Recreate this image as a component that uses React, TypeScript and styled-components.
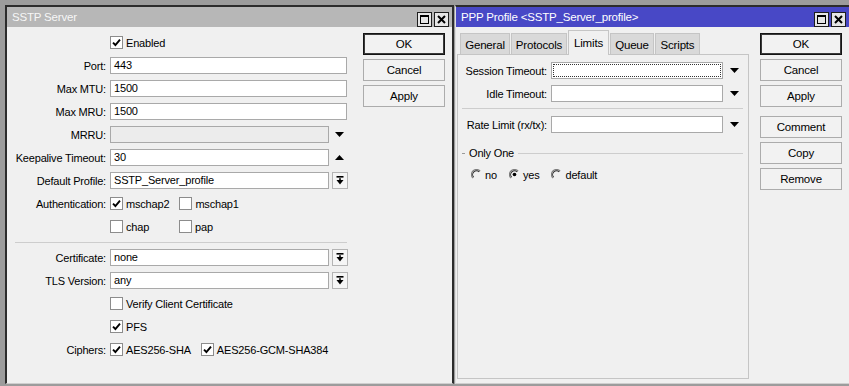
import React from 'react';
import styled, { createGlobalStyle } from 'styled-components';

const GlobalStyle = createGlobalStyle`
  html, body {
    margin: 0;
    padding: 0;
  }
  body {
    background: #9c9c9c;
    font-family: "Liberation Sans", Arial, sans-serif;
    font-size: 11px;
    letter-spacing: -0.18px;
    color: #000;
    overflow: hidden;
  }
`;

const Desktop = styled.div`
  display: flex;
  align-items: flex-start;
  gap: 1px;
  height: 386px;
  padding: 5px 0 0 5px;
  box-sizing: border-box;
`;

const Window = styled.div<{ $w: number; $active?: boolean }>`
  flex: none;
  width: ${({ $w }) => $w}px;
  height: 379px;
  box-sizing: border-box;
  display: flex;
  flex-direction: column;
  background: #f0f0f0;
  border-top: 2px solid #2c2c2c;
  border-left: ${({ $active }) => ($active ? '1px solid #dedede' : '2px solid #2c2c2c')};
  border-right: ${({ $active }) => ($active ? 'none' : '2px solid #2c2c2c')};
  border-bottom: 1px solid #cfcfcf;
`;

const TitleBar = styled.div<{ $active?: boolean }>`
  flex: none;
  height: 20px;
  display: flex;
  align-items: center;
  justify-content: space-between;
  padding: 0 3px 0 5px;
  background: ${({ $active }) => ($active ? '#4848c6' : '#b7b7b7')};
  color: ${({ $active }) => ($active ? '#ffffff' : '#f6f6f6')};
  font-size: 11.5px;
`;

const TitleButtons = styled.div`
  display: flex;
  gap: 2px;
  margin-top: 4px;
`;

const TitleButton = styled.div`
  width: 15px;
  height: 15px;
  box-sizing: border-box;
  border: 1px solid #1e1e1e;
  background: #e6e6e6;
  display: flex;
  align-items: center;
  justify-content: center;
`;

const Body = styled.div`
  flex: 1;
  display: flex;
  min-height: 0;
`;

const Form = styled.div`
  flex: none;
  width: 340px;
  padding-top: 4px;
  display: flex;
  flex-direction: column;
`;

const Row = styled.div`
  display: flex;
  align-items: center;
  height: 23px;
`;

const Label = styled.div<{ $w: number }>`
  flex: none;
  width: ${({ $w }) => $w}px;
  margin-right: 4px;
  text-align: right;
  white-space: nowrap;
`;

const Field = styled.div<{ $w: number; $disabled?: boolean; $focused?: boolean }>`
  position: relative;
  flex: none;
  width: ${({ $w }) => $w}px;
  height: 17px;
  box-sizing: border-box;
  border: 1px solid #a9a9a9;
  background: ${({ $disabled }) => ($disabled ? '#ececec' : '#ffffff')};
  padding: 0 3px;
  line-height: 15px;
  white-space: nowrap;
  overflow: hidden;

  &::after {
    content: '';
    display: ${({ $focused }) => ($focused ? 'block' : 'none')};
    position: absolute;
    inset: 1px;
    border: 1px dotted #333;
  }
`;

const Slot = styled.div<{ $w: number }>`
  flex: none;
  width: ${({ $w }) => $w}px;
  height: 17px;
  margin-left: 3px;
  display: flex;
  align-items: center;
  justify-content: center;
`;

const ComboButton = styled(Slot)`
  box-sizing: border-box;
  border: 1px solid #b4b4b4;
  background: #f5f5f5;
`;

const ChecksRow = styled.div<{ $gap?: number }>`
  display: flex;
  align-items: center;
  gap: ${({ $gap }) => $gap ?? 10}px;
`;

const CheckItem = styled.div<{ $minW?: number }>`
  display: flex;
  align-items: center;
  gap: 3px;
  min-width: ${({ $minW }) => ($minW ? `${$minW}px` : 'auto')};
  white-space: nowrap;
`;

const Box = styled.div`
  flex: none;
  width: 13px;
  height: 13px;
  box-sizing: border-box;
  border: 1px solid #8c8c8c;
  background: #fff;
  display: flex;
  align-items: center;
  justify-content: center;
`;

const Separator = styled.div<{ $m: string }>`
  height: 1px;
  background: #cdcdcd;
  margin: ${({ $m }) => $m};
`;

const Spacer = styled.div<{ $w: number }>`
  flex: none;
  width: ${({ $w }) => $w}px;
`;

const Buttons = styled.div<{ $ml: number }>`
  flex: none;
  display: flex;
  flex-direction: column;
  gap: 4px;
  margin: 6px 0 0 ${({ $ml }) => $ml}px;
`;

const Button = styled.div<{ $default?: boolean; $gapTop?: number }>`
  width: 82px;
  height: 22px;
  box-sizing: border-box;
  display: flex;
  align-items: center;
  justify-content: center;
  background: #f2f2f2;
  border: 1px solid ${({ $default }) => ($default ? '#151515' : '#acacac')};
  box-shadow: ${({ $default }) => ($default ? 'inset 0 0 0 1px #3a3a3a' : 'none')};
  margin-top: ${({ $gapTop }) => $gapTop ?? 0}px;
  font-size: 11.5px;
`;

const TabsArea = styled.div`
  flex: none;
  width: 292px;
  margin-left: 1px;
  display: flex;
  flex-direction: column;
`;

const TabStrip = styled.div`
  flex: none;
  height: 24px;
  margin: 3px 0 0 3px;
  display: flex;
  align-items: flex-end;
  gap: 1px;
`;

const Tab = styled.div<{ $w: number; $active?: boolean }>`
  width: ${({ $w }) => $w}px;
  height: ${({ $active }) => ($active ? 25 : 21)}px;
  box-sizing: border-box;
  display: flex;
  align-items: center;
  justify-content: center;
  padding-top: ${({ $active }) => ($active ? 0 : 1)}px;
  border: 1px solid #c5c5c5;
  border-bottom: none;
  background: ${({ $active }) => ($active ? '#f0f0f0' : '#d9d9d9')};
  margin-bottom: ${({ $active }) => ($active ? -1 : 0)}px;
  position: relative;
  z-index: ${({ $active }) => ($active ? 1 : 0)};
  font-size: 11.5px;
`;

const Panel = styled.div`
  flex: 1;
  margin-bottom: 4px;
  border: 1px solid #c5c5c5;
  background: #f0f0f0;
  padding-top: 4px;
  display: flex;
  flex-direction: column;
`;

const GroupHeader = styled.div`
  display: flex;
  align-items: center;
  gap: 4px;
  height: 14px;
  margin: 10px 5px 0 4px;

  &::before {
    content: '';
    width: 3px;
    height: 1px;
    background: #9a9a9a;
  }
  &::after {
    content: '';
    flex: 1;
    height: 1px;
    background: #cdcdcd;
  }
`;

const RadioRow = styled.div`
  display: flex;
  align-items: center;
  gap: 12px;
  height: 23px;
  margin-top: 3px;
  padding-left: 13px;
`;

const RadioItem = styled.div`
  display: flex;
  align-items: center;
  gap: 3px;
`;

const Check = () => (
  <svg width="11" height="11" viewBox="0 0 11 11">
    <path d="M2 5.6 L4.4 8 L9 2.6" fill="none" stroke="#000" strokeWidth="1.9" />
  </svg>
);

const Checkbox = ({ checked, label, minW }: { checked?: boolean; label: string; minW?: number }) => (
  <CheckItem $minW={minW}>
    <Box>{checked && <Check />}</Box>
    <span>{label}</span>
  </CheckItem>
);

const Radio = ({ checked, label }: { checked?: boolean; label: string }) => (
  <RadioItem>
    <svg width="11" height="11" viewBox="0 0 12 12">
      <path d="M10 2.2 A5.3 5.3 0 0 0 2 10" fill="none" stroke="#7d7d7d" strokeWidth="1.2" />
      <path d="M9 3.2 A4 4 0 0 0 3 9" fill="none" stroke="#2a2a2a" strokeWidth="1.1" />
      {checked && <circle cx="6" cy="6" r="2" fill="#000" />}
    </svg>
    <span>{label}</span>
  </RadioItem>
);

const TriangleDown = () => (
  <svg width="9" height="5" viewBox="0 0 9 5">
    <path d="M0 0 H9 L4.5 5 Z" fill="#000" />
  </svg>
);

const TriangleUp = () => (
  <svg width="9" height="5" viewBox="0 0 9 5">
    <path d="M0 5 H9 L4.5 0 Z" fill="#000" />
  </svg>
);

const ComboIcon = () => (
  <svg width="8" height="9" viewBox="0 0 8 9">
    <rect x="0.5" y="0" width="7" height="1.6" fill="#000" />
    <rect x="3.2" y="2.2" width="1.6" height="2" fill="#000" />
    <path d="M0.5 4 H7.5 L4 8.5 Z" fill="#000" />
  </svg>
);

const MaxIcon = () => (
  <svg width="9" height="9" viewBox="0 0 9 9">
    <rect x="0.5" y="0.5" width="8" height="8" fill="none" stroke="#000" strokeWidth="1" />
    <rect x="0" y="0" width="9" height="2" fill="#000" />
  </svg>
);

const CloseIcon = () => (
  <svg width="9" height="9" viewBox="0 0 9 9">
    <path d="M1 1 L8 8 M8 1 L1 8" stroke="#000" strokeWidth="2" />
  </svg>
);

const WindowControls = () => (
  <TitleButtons>
    <TitleButton><MaxIcon /></TitleButton>
    <TitleButton><CloseIcon /></TitleButton>
  </TitleButtons>
);

const L = 99;

const SstpServer = () => (
  <Window $w={449}>
    <TitleBar>
      <span>SSTP Server</span>
      <WindowControls />
    </TitleBar>
    <Body>
      <Form>
        <Row>
          <Spacer $w={L + 4} />
          <Checkbox checked label="Enabled" />
        </Row>
        <Row><Label $w={L}>Port:</Label><Field $w={237}>443</Field></Row>
        <Row><Label $w={L}>Max MTU:</Label><Field $w={237}>1500</Field></Row>
        <Row><Label $w={L}>Max MRU:</Label><Field $w={237}>1500</Field></Row>
        <Row>
          <Label $w={L}>MRRU:</Label>
          <Field $w={219} $disabled />
          <Slot $w={15}><TriangleDown /></Slot>
        </Row>
        <Row>
          <Label $w={L}>Keepalive Timeout:</Label>
          <Field $w={219}>30</Field>
          <Slot $w={15}><TriangleUp /></Slot>
        </Row>
        <Row>
          <Label $w={L}>Default Profile:</Label>
          <Field $w={219}>SSTP_Server_profile</Field>
          <ComboButton $w={16}><ComboIcon /></ComboButton>
        </Row>
        <Row>
          <Label $w={L}>Authentication:</Label>
          <ChecksRow>
            <Checkbox checked label="mschap2" minW={59} />
            <Checkbox label="mschap1" />
          </ChecksRow>
        </Row>
        <Row>
          <Spacer $w={L + 4} />
          <ChecksRow>
            <Checkbox label="chap" minW={59} />
            <Checkbox label="pap" />
          </ChecksRow>
        </Row>
        <Separator $m="4px 0 3px 8px" />
        <Row>
          <Label $w={L}>Certificate:</Label>
          <Field $w={219}>none</Field>
          <ComboButton $w={16}><ComboIcon /></ComboButton>
        </Row>
        <Row>
          <Label $w={L}>TLS Version:</Label>
          <Field $w={219}>any</Field>
          <ComboButton $w={16}><ComboIcon /></ComboButton>
        </Row>
        <Row>
          <Spacer $w={L + 4} />
          <Checkbox label="Verify Client Certificate" />
        </Row>
        <Row>
          <Spacer $w={L + 4} />
          <Checkbox checked label="PFS" />
        </Row>
        <Row>
          <Label $w={L}>Ciphers:</Label>
          <ChecksRow>
            <Checkbox checked label="AES256-SHA" />
            <Checkbox checked label="AES256-GCM-SHA384" />
          </ChecksRow>
        </Row>
      </Form>
      <Buttons $ml={16}>
        <Button $default>OK</Button>
        <Button>Cancel</Button>
        <Button>Apply</Button>
      </Buttons>
    </Body>
  </Window>
);

const tabs = [
  { name: 'General', w: 50 },
  { name: 'Protocols', w: 56 },
  { name: 'Limits', w: 41, active: true },
  { name: 'Queue', w: 44 },
  { name: 'Scripts', w: 45 },
];

const R = 89;

const PppProfile = () => (
  <Window $w={394} $active>
    <TitleBar $active>
      <span>PPP Profile &lt;SSTP_Server_profile&gt;</span>
      <WindowControls />
    </TitleBar>
    <Body>
      <TabsArea>
        <TabStrip>
          {tabs.map((t) => (
            <Tab key={t.name} $w={t.w} $active={t.active}>{t.name}</Tab>
          ))}
        </TabStrip>
        <Panel>
          <Row>
            <Label $w={R}>Session Timeout:</Label>
            <Field $w={172} $focused />
            <Slot $w={16}><TriangleDown /></Slot>
          </Row>
          <Row>
            <Label $w={R}>Idle Timeout:</Label>
            <Field $w={172} />
            <Slot $w={16}><TriangleDown /></Slot>
          </Row>
          <Separator $m="3px 5px 4px 4px" />
          <Row>
            <Label $w={R}>Rate Limit (rx/tx):</Label>
            <Field $w={172} />
            <Slot $w={16}><TriangleDown /></Slot>
          </Row>
          <GroupHeader>Only One</GroupHeader>
          <RadioRow>
            <Radio label="no" />
            <Radio checked label="yes" />
            <Radio label="default" />
          </RadioRow>
        </Panel>
      </TabsArea>
      <Buttons $ml={11}>
        <Button $default>OK</Button>
        <Button>Cancel</Button>
        <Button>Apply</Button>
        <Button $gapTop={5}>Comment</Button>
        <Button>Copy</Button>
        <Button>Remove</Button>
      </Buttons>
    </Body>
  </Window>
);

export default function App() {
  return (
    <>
      <GlobalStyle />
      <Desktop>
        <SstpServer />
        <PppProfile />
      </Desktop>
    </>
  );
}
